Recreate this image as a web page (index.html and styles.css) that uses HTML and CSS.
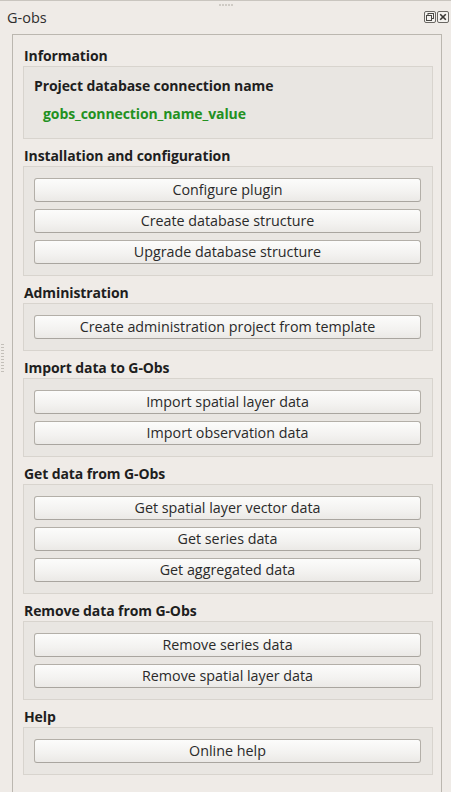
FILE: index.html
```html
<!DOCTYPE html>
<html>
<head>
<meta charset="utf-8">
<link rel="stylesheet" href="styles.css">
</head>
<body>
<div class="dock">
  <div class="grip-top"><span></span><span></span><span></span><span></span><span></span></div>
  <div class="grip-left"></div>
  <div class="titlebar">
    <span class="title">G-obs</span>
    <div class="tb-icons">
      <svg width="12" height="12" viewBox="0 0 12 12">
        <rect x="0.5" y="0.5" width="11" height="11" rx="1.5" fill="#f4f2ef" stroke="#6a6763"/>
        <rect x="4" y="2.5" width="5.5" height="5" fill="none" stroke="#4a4845"/>
        <rect x="2.5" y="4.5" width="5" height="5" fill="#f4f2ef" stroke="#4a4845"/>
      </svg>
      <svg width="12" height="12" viewBox="0 0 12 12">
        <rect x="0.5" y="0.5" width="11" height="11" rx="1.5" fill="#f4f2ef" stroke="#6a6763"/>
        <path d="M3.2 3.2 L8.8 8.8 M8.8 3.2 L3.2 8.8" stroke="#3a3835" stroke-width="1.6"/>
      </svg>
    </div>
  </div>
  <div class="frame">
    <div class="head">Information</div>
    <div class="box info">
      <div class="label">Project database connection name</div>
      <div class="value">gobs_connection_name_value</div>
    </div>

    <div class="head">Installation and configuration</div>
    <div class="box">
      <button class="btn">Configure plugin</button>
      <button class="btn">Create database structure</button>
      <button class="btn">Upgrade database structure</button>
    </div>

    <div class="head">Administration</div>
    <div class="box">
      <button class="btn">Create administration project from template</button>
    </div>

    <div class="head">Import data to G-Obs</div>
    <div class="box">
      <button class="btn">Import spatial layer data</button>
      <button class="btn">Import observation data</button>
    </div>

    <div class="head">Get data from G-Obs</div>
    <div class="box">
      <button class="btn">Get spatial layer vector data</button>
      <button class="btn">Get series data</button>
      <button class="btn">Get aggregated data</button>
    </div>

    <div class="head">Remove data from G-Obs</div>
    <div class="box">
      <button class="btn">Remove series data</button>
      <button class="btn">Remove spatial layer data</button>
    </div>

    <div class="head">Help</div>
    <div class="box">
      <button class="btn">Online help</button>
    </div>
  </div>
</div>
</body>
</html>
```
FILE: styles.css
```css
* { box-sizing: border-box; }
html, body {
  margin: 0;
  padding: 0;
  background: #efebe7;
  overflow: hidden;
}
body {
  font-family: "Open Sans", "DejaVu Sans", sans-serif;
  font-size: 14.3px;
  color: #3c3c3c;
}
.dock {
  position: relative;
  width: 451px;
  height: 792px;
  border-top: 1px solid #c9c5bf;
}
.grip-top {
  height: 5px;
  display: flex;
  justify-content: center;
  align-items: center;
  gap: 1px;
  padding-top: 2px;
}
.grip-top span {
  width: 2px;
  height: 2px;
  background: #cfcbc5;
}
.grip-left {
  position: absolute;
  left: 1px;
  top: 343px;
  width: 3px;
  height: 28px;
  background: repeating-linear-gradient(to bottom, #c3bfb9 0 1px, transparent 1px 3px);
}
.titlebar {
  height: 23px;
  display: flex;
  align-items: center;
  justify-content: space-between;
  padding: 0 2px 0 7px;
}
.title {
  font-size: 14.5px;
  color: #2e2e2e;
}
.tb-icons {
  display: flex;
  gap: 1px;
  margin-top: -2px;
}
.tb-icons svg { display: block; }
.frame {
  margin: 5px 0 0 12px;
  width: 430px;
  height: 760px;
  border: 1px solid #bbb7b0;
  border-bottom: none;
  padding: 0 8px 0 10px;
}
.head {
  height: 20px;
  line-height: 20px;
  margin-top: 7px;
  padding-left: 1px;
  font-weight: bold;
  font-size: 14px;
  letter-spacing: -0.1px;
  color: #1e1e1e;
}
.frame > .head:first-child { margin-top: 11px; }
.box {
  background: #e9e6e2;
  border: 1px solid #d8d4ce;
  padding: 11px 11px 11px 10px;
  display: flex;
  flex-direction: column;
  gap: 7px;
}
.box.info {
  padding: 9px 10px 14px 10px;
  gap: 8px;
}
.label {
  height: 20px;
  line-height: 20px;
  font-weight: bold;
  font-size: 14px;
  letter-spacing: -0.1px;
  color: #1e1e1e;
}
.value {
  height: 20px;
  line-height: 20px;
  padding-left: 9px;
  font-weight: bold;
  font-size: 14px;
  letter-spacing: -0.1px;
  color: #23911f;
}
.btn {
  display: block;
  width: 100%;
  height: 24px;
  margin: 0;
  padding: 0;
  font-family: inherit;
  font-size: 14.3px;
  color: #2a2a2a;
  border: 1px solid #b3afa8;
  border-bottom-color: #a9a59f;
  border-radius: 3px;
  background: linear-gradient(to bottom, #fcfcfb 0%, #f3f2f0 60%, #ebe9e6 100%);
  text-align: center;
  line-height: 22px;
}
```
